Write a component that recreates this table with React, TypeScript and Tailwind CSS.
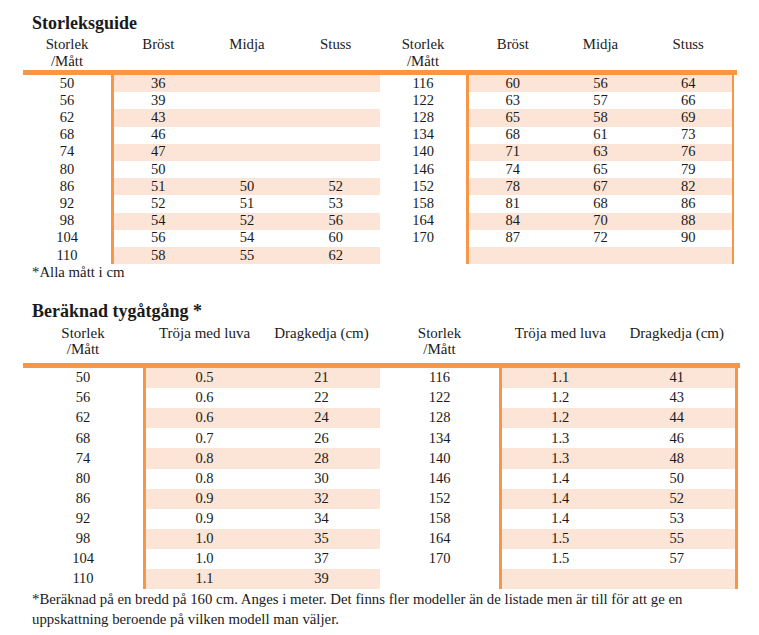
import React from "react";

const t1Left = [
  ["50", "36", "", ""],
  ["56", "39", "", ""],
  ["62", "43", "", ""],
  ["68", "46", "", ""],
  ["74", "47", "", ""],
  ["80", "50", "", ""],
  ["86", "51", "50", "52"],
  ["92", "52", "51", "53"],
  ["98", "54", "52", "56"],
  ["104", "56", "54", "60"],
  ["110", "58", "55", "62"],
];
const t1Right = [
  ["116", "60", "56", "64"],
  ["122", "63", "57", "66"],
  ["128", "65", "58", "69"],
  ["134", "68", "61", "73"],
  ["140", "71", "63", "76"],
  ["146", "74", "65", "79"],
  ["152", "78", "67", "82"],
  ["158", "81", "68", "86"],
  ["164", "84", "70", "88"],
  ["170", "87", "72", "90"],
  ["", "", "", ""],
];
const t2Left = [
  ["50", "0.5", "21"],
  ["56", "0.6", "22"],
  ["62", "0.6", "24"],
  ["68", "0.7", "26"],
  ["74", "0.8", "28"],
  ["80", "0.8", "30"],
  ["86", "0.9", "32"],
  ["92", "0.9", "34"],
  ["98", "1.0", "35"],
  ["104", "1.0", "37"],
  ["110", "1.1", "39"],
];
const t2Right = [
  ["116", "1.1", "41"],
  ["122", "1.2", "43"],
  ["128", "1.2", "44"],
  ["134", "1.3", "46"],
  ["140", "1.3", "48"],
  ["146", "1.4", "50"],
  ["152", "1.4", "52"],
  ["158", "1.4", "53"],
  ["164", "1.5", "55"],
  ["170", "1.5", "57"],
  ["", "", ""],
];

function SizeHead() {
  return (
    <>
      Storlek
      <br />
      /Mått
    </>
  );
}

export default function App() {
  return (
    <div className="w-[759px] h-[635px] bg-white text-[#1a1a1a] font-[family-name:Liberation_Serif,serif] text-[14.5px]">
      {/* Section 1 */}
      <div className="pt-[12px] pl-[32px] text-[18px] font-bold leading-[22px]">Storleksguide</div>
      <div className="ml-[23px] w-[714px] mt-[2px]">
        <div className="flex leading-[17px] text-[14.8px]">
          <div className="flex w-[357px]">
            <div className="w-[88px] text-center"><SizeHead /></div>
            <div className="w-[3px]" />
            <div className="flex-1 text-center">Bröst</div>
            <div className="flex-1 text-center">Midja</div>
            <div className="flex-1 text-center">Stuss</div>
          </div>
          <div className="flex w-[357px]">
            <div className="w-[86px] text-center"><SizeHead /></div>
            <div className="w-[3px]" />
            <div className="flex-1 text-center">Bröst</div>
            <div className="flex-1 text-center">Midja</div>
            <div className="flex-1 text-center">Stuss</div>
            <div className="w-[5px]" />
          </div>
        </div>
        <div className="h-[5px] bg-[#f79646]" />
        <div className="flex">
          <div className="w-[357px]">
            {t1Left.map((r, i) => (
              <div key={i} className="flex h-[17.2px]">
                <div className="w-[88px] flex items-center justify-center">{r[0]}</div>
                <div className={`flex-1 flex border-l-[3px] border-[#f79646] ${i % 2 === 0 ? "bg-[#fce4d6]" : "bg-white"}`}>
                  <div className="flex-1 flex items-center justify-center">{r[1]}</div>
                  <div className="flex-1 flex items-center justify-center">{r[2]}</div>
                  <div className="flex-1 flex items-center justify-center">{r[3]}</div>
                </div>
              </div>
            ))}
          </div>
          <div className="w-[357px]">
            {t1Right.map((r, i) => (
              <div key={i} className="flex h-[17.2px] pr-[3px]">
                <div className="w-[86px] flex items-center justify-center">{r[0]}</div>
                <div className={`flex-1 flex border-l-[3px] border-r-[2px] border-[#f79646] ${i % 2 === 0 ? "bg-[#fce4d6]" : "bg-white"}`}>
                  <div className="flex-1 flex items-center justify-center">{r[1]}</div>
                  <div className="flex-1 flex items-center justify-center">{r[2]}</div>
                  <div className="flex-1 flex items-center justify-center">{r[3]}</div>
                </div>
              </div>
            ))}
          </div>
        </div>
      </div>
      <div className="pl-[32px] leading-[17px] text-[14.8px]">*Alla mått i cm</div>

      {/* Section 2 */}
      <div className="mt-[19px] pl-[32px] text-[18px] font-bold leading-[22px]">Beräknad tygåtgång *</div>
      <div className="ml-[23px] w-[717px]">
        <div className="flex leading-[16px] pt-[3px] pb-[6px] text-[15px]">
          <div className="flex w-[357px]">
            <div className="w-[120px] text-center"><SizeHead /></div>
            <div className="w-[3px]" />
            <div className="flex-1 text-center">Tröja med luva</div>
            <div className="flex-1 text-center">Dragkedja (cm)</div>
          </div>
          <div className="flex w-[360px]">
            <div className="w-[119px] text-center"><SizeHead /></div>
            <div className="w-[3px]" />
            <div className="flex-1 text-center">Tröja med luva</div>
            <div className="flex-1 text-center">Dragkedja (cm)</div>
            <div className="w-[5px]" />
          </div>
        </div>
        <div className="h-[5px] bg-[#f79646]" />
        <div className="flex">
          <div className="w-[357px]">
            {t2Left.map((r, i) => (
              <div key={i} className="flex h-[20.1px]">
                <div className="w-[120px] flex items-center justify-center">{r[0]}</div>
                <div className={`flex-1 flex border-l-[3px] border-[#f79646] ${i % 2 === 0 ? "bg-[#fce4d6]" : "bg-white"}`}>
                  <div className="flex-1 flex items-center justify-center">{r[1]}</div>
                  <div className="flex-1 flex items-center justify-center">{r[2]}</div>
                </div>
              </div>
            ))}
          </div>
          <div className="w-[360px]">
            {t2Right.map((r, i) => (
              <div key={i} className="flex h-[20.1px] pr-[2px]">
                <div className="w-[119px] flex items-center justify-center">{r[0]}</div>
                <div className={`flex-1 flex border-l-[3px] border-r-[3px] border-[#f79646] ${i % 2 === 0 ? "bg-[#fce4d6]" : "bg-white"}`}>
                  <div className="flex-1 flex items-center justify-center">{r[1]}</div>
                  <div className="flex-1 flex items-center justify-center">{r[2]}</div>
                </div>
              </div>
            ))}
          </div>
        </div>
      </div>
      <div className="pl-[32px] leading-[20px] text-[14.8px]">
        *Beräknad på en bredd på 160 cm. Anges i meter. Det finns fler modeller än de listade men är till för att ge en
        <br />
        uppskattning beroende på vilken modell man väljer.
      </div>
    </div>
  );
}
